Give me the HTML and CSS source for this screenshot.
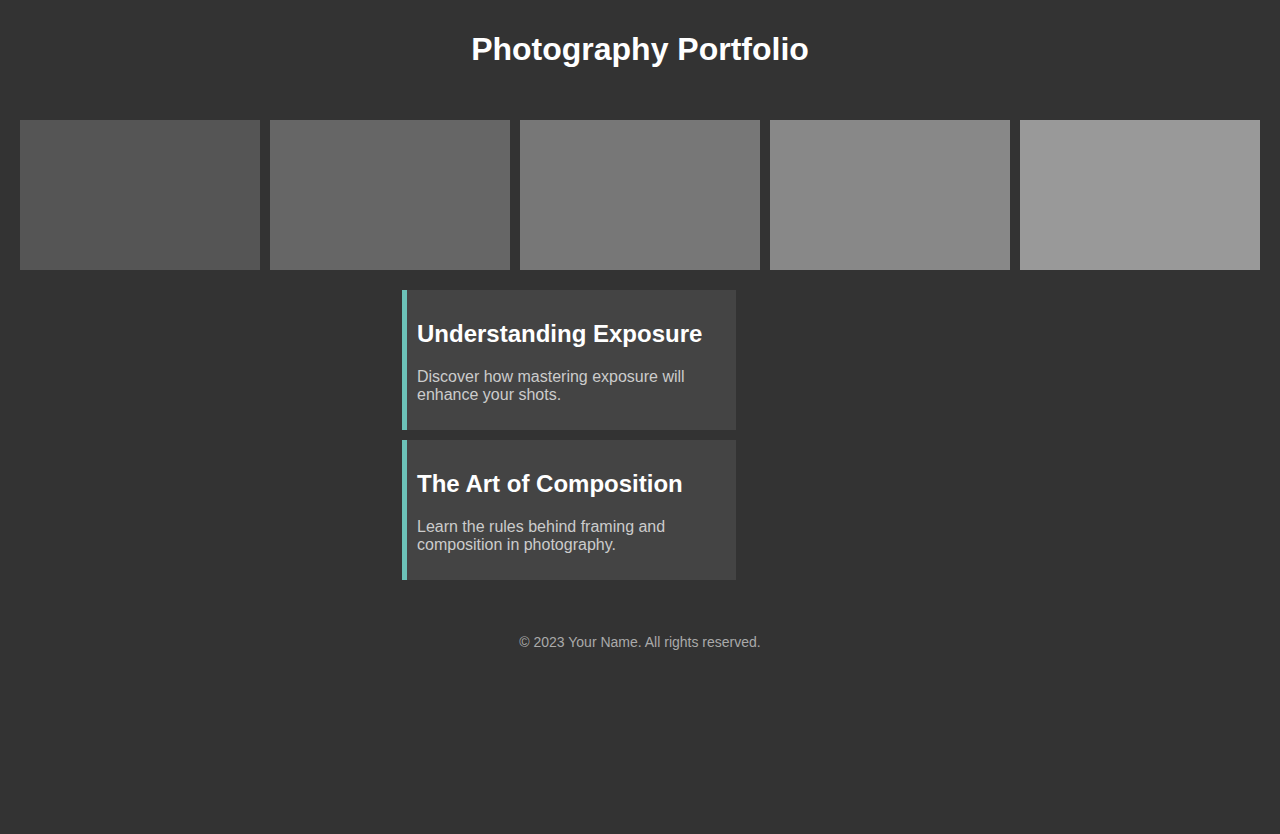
FILE: index.html
```html
<!DOCTYPE html>
<html lang="en">
<head>
<meta charset="utf-8">
<title>Photography Portfolio</title>
<link rel="stylesheet" href="styles.css">
</head>
<body>
<header class="site-header">
  <h1 class="site-title">Photography Portfolio</h1>
</header>
<section class="gallery">
  <div class="tile tile-1"></div>
  <div class="tile tile-2"></div>
  <div class="tile tile-3"></div>
  <div class="tile tile-4"></div>
  <div class="tile tile-5"></div>
</section>
<section class="articles">
  <article class="card">
    <h2 class="card-title">Understanding Exposure</h2>
    <p class="card-text">Discover how mastering exposure will enhance your shots.</p>
  </article>
  <article class="card">
    <h2 class="card-title">The Art of Composition</h2>
    <p class="card-text">Learn the rules behind framing and composition in photography.</p>
  </article>
</section>
<footer class="site-footer">
  <p class="footer-text">© 2023 Your Name. All rights reserved.</p>
</footer>
</body>
</html>
```
FILE: styles.css
```css
html, body {
  margin: 0;
  padding: 0;
  background: #333333;
  color: #ffffff;
  font-family: "Liberation Sans", Arial, sans-serif;
}

.site-header {
  padding: 10px;
  text-align: center;
}

.site-title {
  margin: 0.67em 0;
  font-size: 32px;
  line-height: 37px;
  font-weight: bold;
}

.gallery {
  display: flex;
  gap: 10px;
  padding: 20px;
}

.tile {
  flex: 1;
  height: 150px;
}

.tile-1 { background: #555555; }
.tile-2 { background: #666666; }
.tile-3 { background: #777777; }
.tile-4 { background: #888888; }
.tile-5 { background: #999999; }

.articles {
  display: flex;
  flex-direction: column;
  gap: 10px;
  width: 334px;
  margin-left: 402px;
}

.card {
  background: #444444;
  border-left: 5px solid #6cc2b8;
  padding: 10px;
  height: 140px;
  box-sizing: border-box;
}

.card-title {
  margin: 20px 0 20px;
  font-size: 24px;
  line-height: 28px;
  font-weight: bold;
  color: #ffffff;
}

.card-text {
  margin: 0;
  font-size: 16px;
  line-height: 18px;
  color: #cccccc;
}

.site-footer {
  padding: 54px 20px 20px;
  text-align: center;
}

.footer-text {
  margin: 0;
  font-size: 14px;
  line-height: 16px;
  color: #aaaaaa;
}
```
